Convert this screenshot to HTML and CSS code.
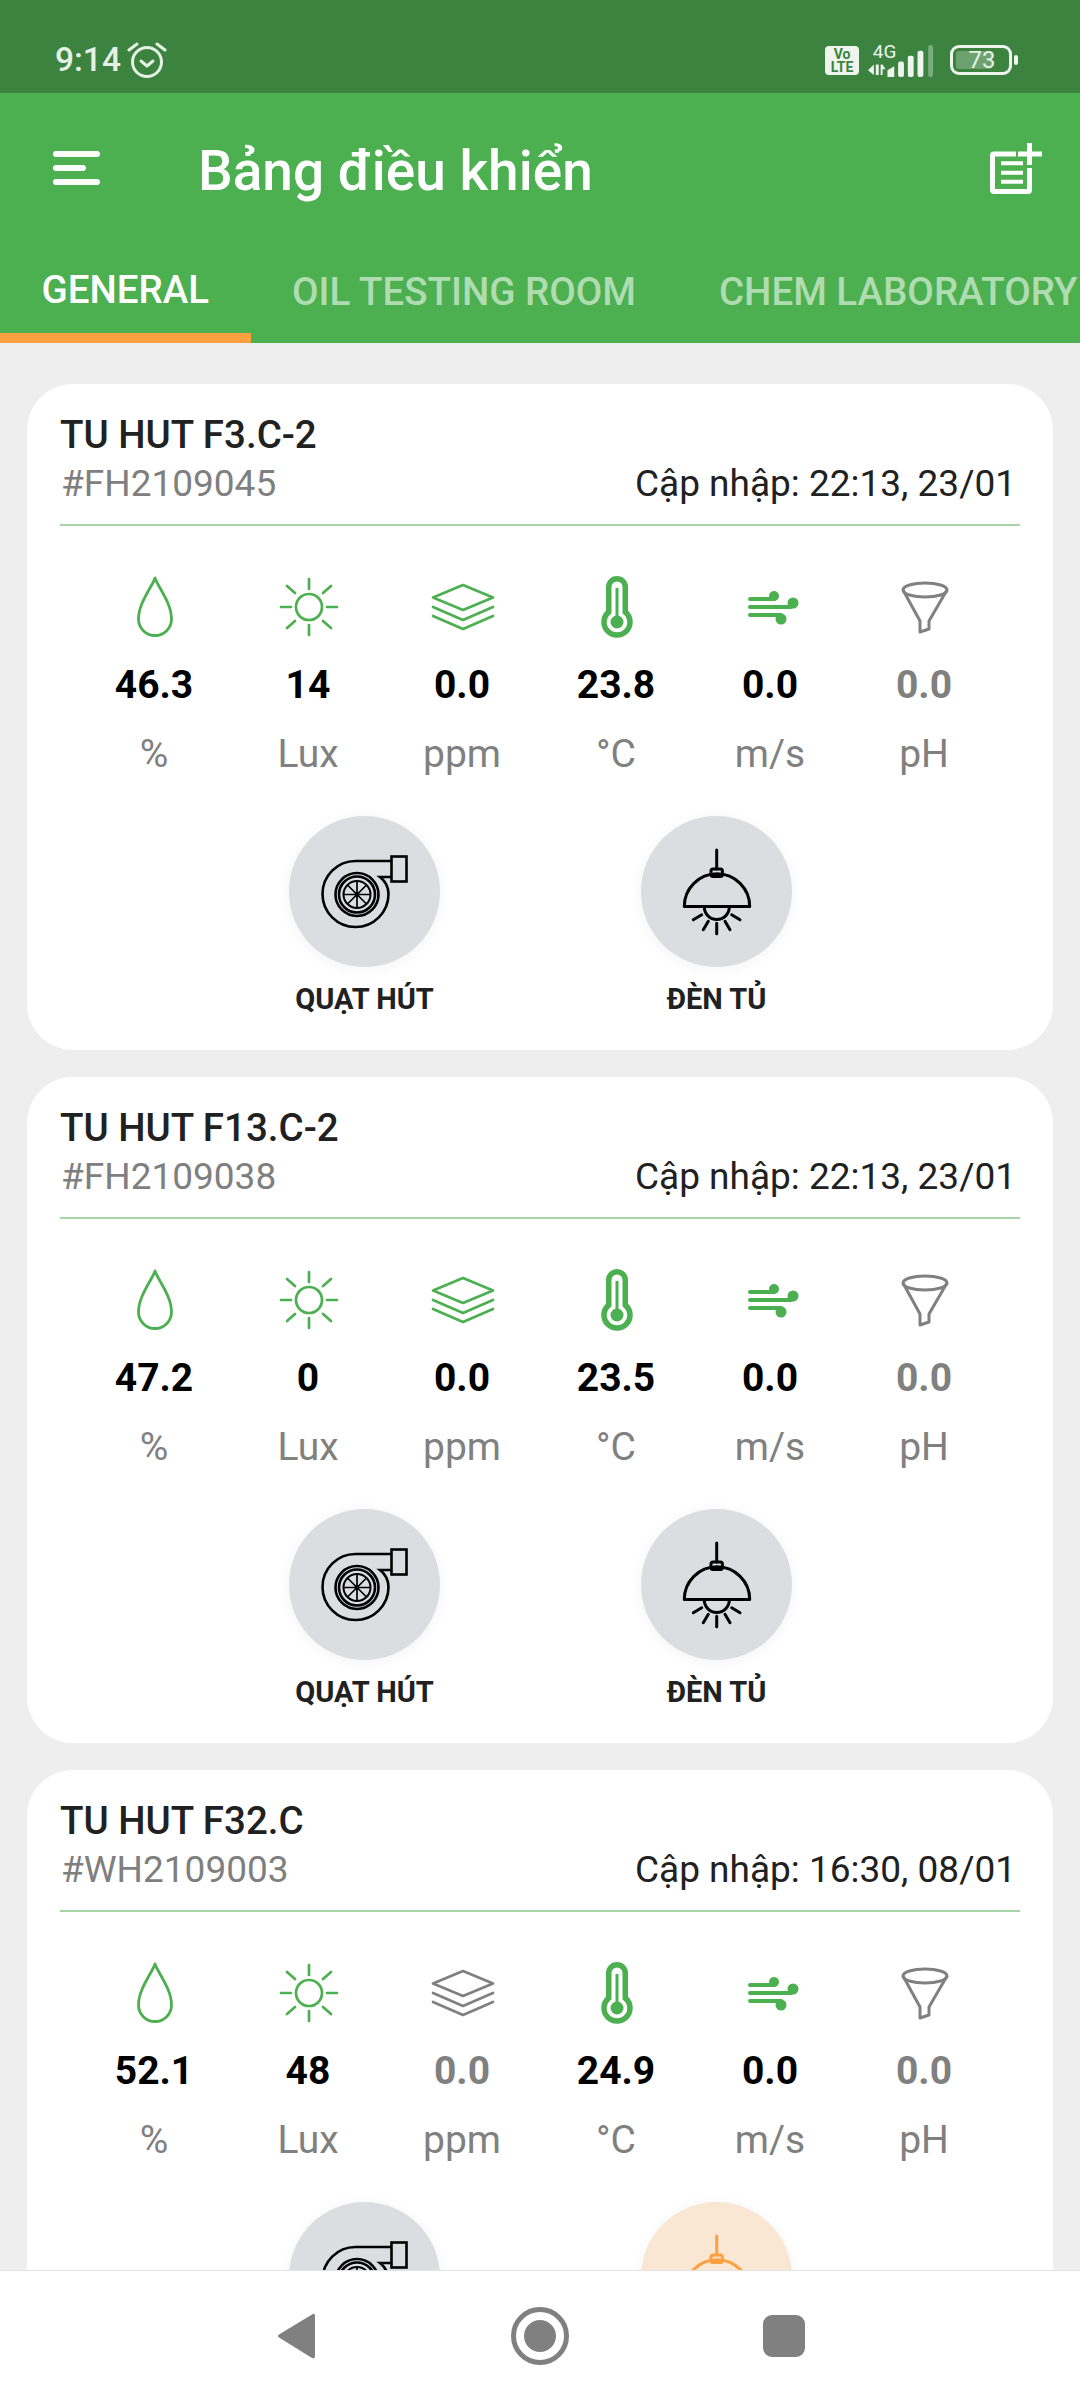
FILE: index.html
```html
<!DOCTYPE html>
<html lang="vi">
<head>
<meta charset="utf-8">
<title>Bảng điều khiển</title>
<link rel="stylesheet" href="styles.css">
</head>
<body>
<svg class="defs" width="0" height="0" aria-hidden="true">
  <defs>
    <symbol id="i-drop" viewBox="0 0 64 64"><path d="M32 3C29 12 15.500 28 15.500 44A16.500 16.500 0 0 0 48.500 44C48.500 28 35 12 32 3Z" fill="none" stroke="currentColor" stroke-width="2.800" stroke-linejoin="round"/></symbol>
    <symbol id="i-sun" viewBox="0 0 64 64"><g fill="none" stroke="currentColor" stroke-width="2.700" stroke-linecap="round"><circle cx="32" cy="32" r="13"/><path d="M32 4V14M32 50V60M4 32H14M50 32H60M10 11L18 18M54 11L46 18M10 53L18 46M54 53L46 46"/></g></symbol>
    <symbol id="i-layers" viewBox="0 0 64 64"><g fill="none" stroke="currentColor" stroke-width="2.700" stroke-linejoin="round" stroke-linecap="round"><path d="M32 10L62 22.500L32 35L2 22.500Z"/><path d="M2 32L32 45L62 32"/><path d="M2 41L32 54L62 41"/></g></symbol>
    <symbol id="i-thermo" viewBox="0 0 64 64"><path d="M23.750 37V12A8.250 8.250 0 0 1 40.250 12V37A13 13 0 1 1 23.750 37Z" fill="#fff" stroke="currentColor" stroke-width="5.500"/><circle cx="32" cy="47" r="6.500" fill="currentColor"/><path d="M32 13V47" stroke="currentColor" stroke-width="3"/></symbol>
    <symbol id="i-wind" viewBox="0 0 64 64"><g stroke="currentColor" stroke-width="4" stroke-linecap="round"><path d="M11 24H35M11 32H52M11 40H42"/></g><g fill="currentColor"><circle cx="35" cy="21" r="5"/><circle cx="54" cy="28" r="5.500"/><circle cx="42" cy="44" r="5.500"/></g></symbol>
    <symbol id="i-funnel" viewBox="0 0 64 64"><g fill="none" stroke="currentColor" stroke-width="3" stroke-linejoin="round"><ellipse cx="32" cy="15" rx="22" ry="7"/><path d="M10 15L27 46V57L36 54V46L54 15"/></g></symbol>
    <symbol id="i-fan" viewBox="0 0 90 90"><g fill="none" stroke="currentColor" stroke-width="2.600"><rect x="71.500" y="9.500" width="15" height="25"/><path d="M71.500 14H35.500A33 33 0 1 0 68.500 47C68.500 40 65 34 60 30H71.500"/><circle cx="37" cy="47.500" r="21.500"/><circle cx="37" cy="47.500" r="18"/><circle cx="37" cy="47.500" r="13.500" stroke-width="2"/><path d="M37 34V61M23.500 47.500H50.500M27.500 38L46.500 57M46.500 38L27.500 57" stroke-width="1.700"/></g><circle cx="37" cy="47.500" r="2.400" fill="currentColor"/></symbol>
    <symbol id="i-lamp" viewBox="0 0 90 90"><g fill="none" stroke="currentColor" stroke-width="3" stroke-linecap="round" stroke-linejoin="round"><path d="M44.700 3V22"/><rect x="39" y="22" width="11.400" height="7.500" rx="2"/><path d="M12.300 59.500H77.700A32.700 32.700 0 0 0 12.300 59.500Z"/><path d="M32.300 60A12.500 12.500 0 0 0 57.300 60"/><path d="M21.300 72.800L29.700 67.800M31.300 82.800L36.300 74.200M44.700 86.800V76.200M58 82.800L53 74.200M68 72.800L59.700 67.800"/></g></symbol>
  </defs>
</svg>

<header class="top">
  <div class="status">
    <div class="status-left">
      <span class="clock">9:14</span>
      <svg class="alarm" viewBox="0 0 40 36"><g fill="none" stroke="currentColor" stroke-width="3" stroke-linecap="round" stroke-linejoin="round"><circle cx="20" cy="20" r="14.500"/><path d="M14 19L20 24L26 19"/><path d="M2 8L10 2M38 8L30 2"/></g></svg>
    </div>
    <div class="status-right">
      <div class="volte"><span>Vo</span><span>LTE</span></div>
      <svg class="signal" viewBox="0 0 70 34">
        <text x="5" y="13" class="net">4G</text>
        <g fill="currentColor">
          <path d="M0 26L6 20V31ZM8 20H11V31H8ZM13 20H15L18 25H15V31H13Z"/>
          <path d="M20 26L27 22V33H20Z"/>
          <rect x="31" y="17" width="6" height="16" rx="2"/>
          <rect x="41" y="11" width="6" height="22" rx="2"/>
          <rect x="51" y="6" width="6" height="27" rx="2"/>
          <rect x="62" y="0" width="5" height="33" rx="2" opacity=".35"/>
        </g>
      </svg>
      <div class="battery"><span class="battery-fill"></span><span class="battery-num">73</span></div>
      <span class="battery-nub"></span>
    </div>
  </div>
  <div class="appbar">
    <div class="burger"><span></span><span class="short"></span><span></span></div>
    <h1 class="title">Bảng điều khiển</h1>
    <svg class="note" viewBox="0 0 54 54"><g fill="none" stroke="currentColor" stroke-width="5"><path d="M28 13H6A1.500 1.500 0 0 0 4.500 14.500V49A1.500 1.500 0 0 0 6 50.500H40A1.500 1.500 0 0 0 41.500 49V27"/><path d="M41.500 2V24M30 13H54"/><path d="M13 22.300H35M13 31.700H35M13 40.700H35" stroke-width="4"/></g></svg>
  </div>
  <nav class="tabs">
    <span class="tab active">GENERAL</span>
    <span class="tab">OIL TESTING ROOM</span>
    <span class="tab">CHEM LABORATORY</span>
  </nav>
</header>

<main class="list">
  <section class="card">
    <h2 class="name">TU HUT F3.C-2</h2>
    <div class="sub"><span class="code">#FH2109045</span><span class="updated">Cập nhập: 22:13, 23/01</span></div>
    <div class="metrics">
      <div class="metric"><svg class="ic on"><use href="#i-drop"/></svg><b class="val">46.3</b><span class="unit">%</span></div>
      <div class="metric"><svg class="ic on"><use href="#i-sun"/></svg><b class="val">14</b><span class="unit">Lux</span></div>
      <div class="metric"><svg class="ic on"><use href="#i-layers"/></svg><b class="val">0.0</b><span class="unit">ppm</span></div>
      <div class="metric"><svg class="ic on"><use href="#i-thermo"/></svg><b class="val">23.8</b><span class="unit">°C</span></div>
      <div class="metric"><svg class="ic on"><use href="#i-wind"/></svg><b class="val">0.0</b><span class="unit">m/s</span></div>
      <div class="metric"><svg class="ic off"><use href="#i-funnel"/></svg><b class="val dim">0.0</b><span class="unit">pH</span></div>
    </div>
    <div class="controls">
      <div class="control"><div class="round"><svg class="ctl"><use href="#i-fan"/></svg></div><span class="ctl-label">QUẠT HÚT</span></div>
      <div class="control"><div class="round"><svg class="ctl"><use href="#i-lamp"/></svg></div><span class="ctl-label">ĐÈN TỦ</span></div>
    </div>
  </section>

  <section class="card">
    <h2 class="name">TU HUT F13.C-2</h2>
    <div class="sub"><span class="code">#FH2109038</span><span class="updated">Cập nhập: 22:13, 23/01</span></div>
    <div class="metrics">
      <div class="metric"><svg class="ic on"><use href="#i-drop"/></svg><b class="val">47.2</b><span class="unit">%</span></div>
      <div class="metric"><svg class="ic on"><use href="#i-sun"/></svg><b class="val">0</b><span class="unit">Lux</span></div>
      <div class="metric"><svg class="ic on"><use href="#i-layers"/></svg><b class="val">0.0</b><span class="unit">ppm</span></div>
      <div class="metric"><svg class="ic on"><use href="#i-thermo"/></svg><b class="val">23.5</b><span class="unit">°C</span></div>
      <div class="metric"><svg class="ic on"><use href="#i-wind"/></svg><b class="val">0.0</b><span class="unit">m/s</span></div>
      <div class="metric"><svg class="ic off"><use href="#i-funnel"/></svg><b class="val dim">0.0</b><span class="unit">pH</span></div>
    </div>
    <div class="controls">
      <div class="control"><div class="round"><svg class="ctl"><use href="#i-fan"/></svg></div><span class="ctl-label">QUẠT HÚT</span></div>
      <div class="control"><div class="round"><svg class="ctl"><use href="#i-lamp"/></svg></div><span class="ctl-label">ĐÈN TỦ</span></div>
    </div>
  </section>

  <section class="card">
    <h2 class="name">TU HUT F32.C</h2>
    <div class="sub"><span class="code">#WH2109003</span><span class="updated">Cập nhập: 16:30, 08/01</span></div>
    <div class="metrics">
      <div class="metric"><svg class="ic on"><use href="#i-drop"/></svg><b class="val">52.1</b><span class="unit">%</span></div>
      <div class="metric"><svg class="ic on"><use href="#i-sun"/></svg><b class="val">48</b><span class="unit">Lux</span></div>
      <div class="metric"><svg class="ic off"><use href="#i-layers"/></svg><b class="val dim">0.0</b><span class="unit">ppm</span></div>
      <div class="metric"><svg class="ic on"><use href="#i-thermo"/></svg><b class="val">24.9</b><span class="unit">°C</span></div>
      <div class="metric"><svg class="ic on"><use href="#i-wind"/></svg><b class="val">0.0</b><span class="unit">m/s</span></div>
      <div class="metric"><svg class="ic off"><use href="#i-funnel"/></svg><b class="val dim">0.0</b><span class="unit">pH</span></div>
    </div>
    <div class="controls">
      <div class="control"><div class="round"><svg class="ctl"><use href="#i-fan"/></svg></div></div>
      <div class="control"><div class="round lit"><svg class="ctl"><use href="#i-lamp"/></svg></div></div>
    </div>
  </section>
</main>

<footer class="navbar">
  <svg class="nav-back" viewBox="0 0 40 48"><path d="M36 2.500L3 22.500Q1 24 3 25.500L36 46Q39 47.500 39 44V4Q39 .5 36 2.500Z" fill="currentColor"/></svg>
  <svg class="nav-home" viewBox="0 0 58 58"><circle cx="29" cy="29" r="26.500" fill="none" stroke="currentColor" stroke-width="5"/><circle cx="29" cy="29" r="16" fill="currentColor"/></svg>
  <span class="nav-square"></span>
</footer>
</body>
</html>
```
FILE: styles.css
```css
* { box-sizing: border-box; }
html, body { margin: 0; padding: 0; }
body {
  width: 1080px;
  height: 2400px;
  overflow: hidden;
  display: flex;
  flex-direction: column;
  background: #eeeeee;
  font-family: Roboto, "Noto Sans", sans-serif;
}
.defs { position: absolute; }

/* header */
.top { flex: none; background: #4caf50; color: #fff; }
.status {
  height: 93px;
  background: #3c8340;
  color: #e6f1e6;
  display: flex;
  justify-content: space-between;
  align-items: flex-start;
  padding: 42px 62px 0 55px;
}
.status-left { display: flex; align-items: center; gap: 6px; height: 36px; }
.clock { font-size: 33.500px; line-height: 38px; font-weight: 500; }
.alarm { width: 40px; height: 36px; }
.status-right { display: flex; align-items: flex-start; margin-top: 3px; }
.volte {
  width: 34px;
  height: 29px;
  margin: 1px 9px 0 0;
  background: #eef5ee;
  color: #3c8340;
  border-radius: 4px;
  display: flex;
  flex-direction: column;
  align-items: center;
  justify-content: center;
  font-size: 14px;
  line-height: 13px;
  font-weight: 700;
}
.signal { width: 68px; height: 33px; margin: 0 14px 0 0; color: #eef5ee; overflow: visible; }
.net { font-family: Roboto, sans-serif; font-size: 19.500px; fill: #eef5ee; }
.battery {
  position: relative;
  width: 62px;
  height: 30px;
  border: 3px solid #eef5ee;
  border-radius: 9px;
  text-align: center;
  font-size: 24px;
  line-height: 24px;
}
.battery-fill {
  position: absolute;
  left: 3px;
  top: 3px;
  bottom: 3px;
  width: 36px;
  border-radius: 3px;
  background: rgba(255, 255, 255, .25);
}
.battery-num { position: relative; margin-left: 2px; }
.battery-nub {
  width: 4px;
  height: 10px;
  margin: 10px 0 0 2px;
  background: #eef5ee;
  border-radius: 2px;
}

.appbar {
  height: 150px;
  display: flex;
  align-items: center;
  padding: 0 38px 0 53px;
}
.burger { width: 47px; display: flex; flex-direction: column; gap: 8px; margin-top: -1px; }
.burger span { display: block; height: 6px; background: #fff; border-radius: 3px; }
.burger .short { width: 33px; }
.title {
  flex: 1;
  margin: 6px 0 0 98px;
  font-size: 55px;
  line-height: 64px;
  font-weight: 500;
}
.note { width: 54px; height: 54px; color: #fff; }

.tabs { height: 100px; display: flex; overflow: hidden; white-space: nowrap; }
.tab {
  flex: none;
  padding: 3px 41.500px 6px;
  display: flex;
  align-items: center;
  font-size: 38.500px;
  font-weight: 500;
  color: rgba(255, 255, 255, .58);
}
.tab.active { color: #fff; border-bottom: 10px solid #ffa040; padding-bottom: 0; }

/* list */
.list {
  flex: 1;
  min-height: 0;
  overflow: hidden;
  padding: 41px 27px 0;
  display: flex;
  flex-direction: column;
  gap: 27px;
}
.card {
  flex: none;
  height: 666px;
  background: #fff;
  border-radius: 46px;
  padding: 29px 33px 0;
}
.name { margin: 0; font-size: 38.500px; line-height: 44px; font-weight: 500; color: #212121; }
.sub {
  display: flex;
  justify-content: space-between;
  padding: 5px 4px 18px 1px;
  border-bottom: 2px solid #a7d5a9;
  font-size: 37px;
  line-height: 44px;
}
.code { color: #7f7f7f; }
.updated { color: #212121; }

.metrics {
  display: grid;
  grid-template-columns: repeat(6, 154px);
  justify-content: center;
  margin: 49px 2px 0 0;
}
.metric { display: flex; flex-direction: column; align-items: center; }
.ic { width: 64px; height: 64px; margin-left: 2px; overflow: visible; }
.ic.on { color: #4caf50; }
.ic.off { color: #808080; }
.val { margin-top: 24px; font-size: 39px; line-height: 44px; font-weight: 700; color: #000; }
.val.dim { color: #808080; }
.unit { margin-top: 25px; font-size: 39px; line-height: 44px; color: #808080; }

.controls { display: flex; justify-content: center; gap: 201px; margin-top: 40px; padding-left: 1px; }
.control { position: relative; display: flex; flex-direction: column; align-items: center; width: 151px; }
.round {
  width: 151px;
  height: 151px;
  border-radius: 50%;
  background: #dcdde0;
  box-shadow: 0 2px 14px rgba(0, 0, 0, .05);
  color: #000;
  display: flex;
  align-items: center;
  justify-content: center;
}
.round.lit { background: #f9e6d3; color: #ffa040; }
.ctl { width: 90px; height: 90px; }
.ctl-label { margin-top: 15px; font-size: 29px; line-height: 34px; font-weight: 700; color: #212121; white-space: nowrap; }

/* nav bar */
.navbar {
  position: fixed;
  left: 0;
  right: 0;
  bottom: 0;
  height: 130px;
  background: #fff;
  border-top: 1px solid #e3e3e3;
  color: #808080;
}
.navbar svg, .nav-square { position: absolute; }
.nav-back { left: 276px; top: 41px; width: 40px; height: 48px; }
.nav-home { left: 511px; top: 36px; width: 58px; height: 58px; }
.nav-square { left: 763px; top: 44px; width: 42px; height: 42px; border-radius: 9px; background: #808080; }
```
